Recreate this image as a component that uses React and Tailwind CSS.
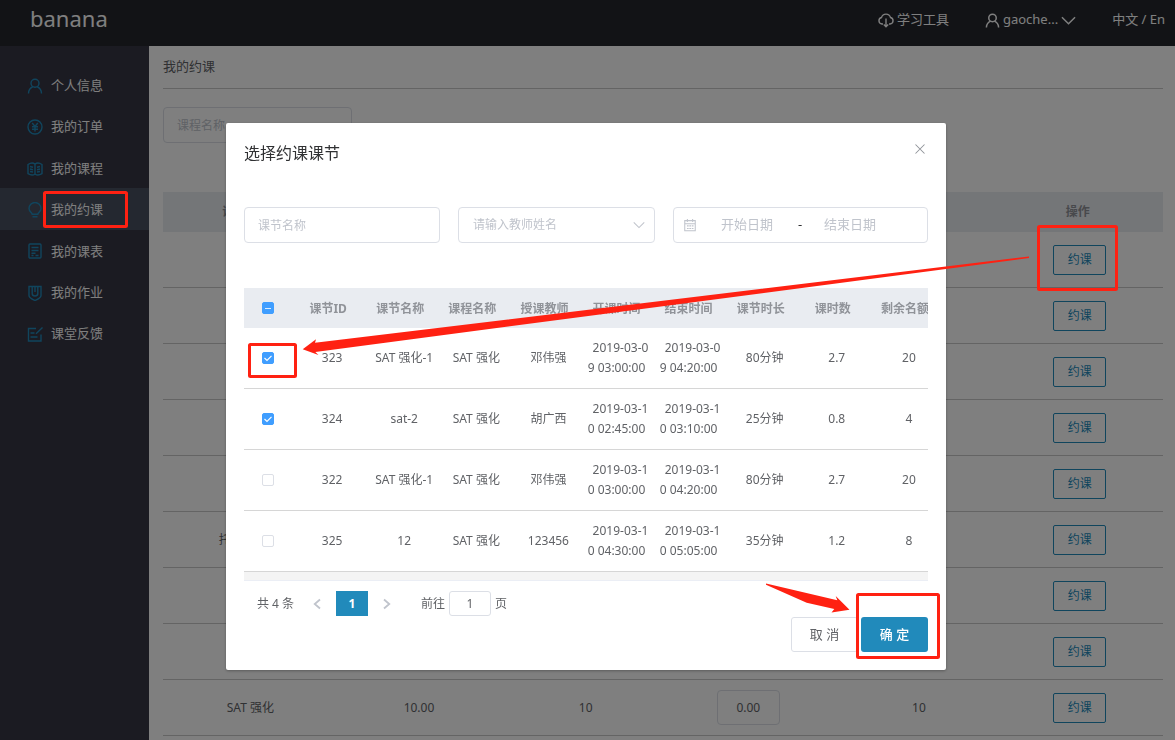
import { useState } from "react";

const menu = [
  { name: "个人信息", icon: "user" },
  { name: "我的订单", icon: "order" },
  { name: "我的课程", icon: "book" },
  { name: "我的约课", icon: "bulb" },
  { name: "我的课表", icon: "doc" },
  { name: "我的作业", icon: "work" },
  { name: "课堂反馈", icon: "edit" },
];

const courses = [
  "SAT 强化",
  "SAT 强化",
  "SAT 强化",
  "SAT 强化",
  "SAT 强化",
  "托福 强化班",
  "SAT 强化",
  "SAT 强化",
  "SAT 强化",
];

const lessons = [
  { id: 323, name: "SAT 强化-1", course: "SAT 强化", teacher: "邓伟强", start: ["2019-03-0", "9 03:00:00"], end: ["2019-03-0", "9 04:20:00"], length: "80分钟", hours: "2.7", left: 20 },
  { id: 324, name: "sat-2", course: "SAT 强化", teacher: "胡广西", start: ["2019-03-1", "0 02:45:00"], end: ["2019-03-1", "0 03:10:00"], length: "25分钟", hours: "0.8", left: 4 },
  { id: 322, name: "SAT 强化-1", course: "SAT 强化", teacher: "邓伟强", start: ["2019-03-1", "0 03:00:00"], end: ["2019-03-1", "0 04:20:00"], length: "80分钟", hours: "2.7", left: 20 },
  { id: 325, name: "12", course: "SAT 强化", teacher: "123456", start: ["2019-03-1", "0 04:30:00"], end: ["2019-03-1", "0 05:05:00"], length: "35分钟", hours: "1.2", left: 8 },
];

const lessonColumns = ["课节ID", "课节名称", "课程名称", "授课教师", "开课时间", "结束时间", "课节时长", "课时数", "剩余名额"];

const iconPaths = {
  user: (
    <>
      <circle cx="8" cy="5.2" r="4" />
      <path d="M1.500 15.500c0-3.200 2-5.600 4.400-6.800M14.500 15.500c0-3.200-2-5.600-4.400-6.800" />
    </>
  ),
  order: (
    <>
      <circle cx="8" cy="8" r="7" />
      <path d="M5.200 4L8 7.500 10.800 4M8 7.500V12.500M5 7.800h6M5 10.200h6" />
    </>
  ),
  book: (
    <>
      <path d="M8 3.200C6.500 1.800 3.500 1.800 1 3.500v9.200c2.500 1.500 5.500 1.500 7 .3 1.500 1.200 4.500 1.200 7-.3V3.500c-2.500-1.700-5.500-1.700-7-.3zM8 3.200V13" />
      <path d="M3 5.500l3 .8M3 8l3 .8M3 10.500l3 .5M13 5.500l-3 .8M13 8l-3 .8M13 10.500l-3 .5" />
    </>
  ),
  bulb: (
    <path d="M5.200 12.300C5 10.500 2 9.500 2 6.500a6 6 0 0 1 12 0c0 3-3 4-3.200 5.800zM5.500 14.800h5" />
  ),
  doc: (
    <>
      <rect x="2" y="1" width="12" height="14" rx="1" />
      <path d="M4.500 4.500h7M4.500 7.500h7M4.500 10.200h4M4.500 12.500h2M8.500 12.500h3" />
    </>
  ),
  work: (
    <>
      <path d="M2 1.500h12v9c0 2.500-3 3.700-6 5-3-1.300-6-2.500-6-5z" />
      <path d="M5.200 2v6.500c0 1.800 1.300 2.500 2.800 2.500s2.800-.7 2.800-2.500V2M8 2v5" />
    </>
  ),
  edit: (
    <>
      <path d="M9 2.500H1.500v12.500h12.500V8.500M3.500 7h4M3.500 11h7" />
      <path d="M9 7.800L15.500 1.500" />
    </>
  ),
  cloud: (
    <>
      <path d="M5 12H4a3.300 3.300 0 0 1-.5-6.500 4.700 4.700 0 0 1 9 0A3.300 3.300 0 0 1 12 12h-1" />
      <path d="M8 6.500V14.500M5.800 12.500L8 14.700l2.200-2.200" />
    </>
  ),
  calendar: (
    <>
      <path d="M2 3h12v11.500H2zM2 6.500h12M5 1v3.500M11 1v3.500" />
      <path d="M4.500 9h2M7.200 9h2M10 9h2M4.500 12h2M7.200 12h2M10 12h2" />
    </>
  ),
  down: <path d="M1 4.500l7 7 7-7" />,
  left: <path d="M12 2L5 8l7 6" />,
  right: <path d="M4 2l7 6-7 6" />,
  close: <path d="M2 2l12 12M14 2L2 14" />,
};

function Icon({ name, className, weight = 1.4 }) {
  return (
    <svg
      viewBox="0 0 16 16"
      fill="none"
      stroke="currentColor"
      strokeWidth={weight}
      className={className}
      aria-hidden="true"
    >
      {iconPaths[name]}
    </svg>
  );
}

function CheckBox({ label, checked, partial, onChange }) {
  return (
    <span className="relative inline-block size-3 align-middle">
      <input
        type="checkbox"
        aria-label={label}
        checked={checked}
        onChange={onChange}
        className="block size-3 appearance-none rounded-[2px] border border-[#dcdfe6] bg-white checked:border-[#409eff] checked:bg-[#409eff]"
      />
      {checked && (
        <svg
          viewBox="0 0 12 12"
          fill="none"
          stroke="white"
          className="pointer-events-none absolute inset-0 size-3"
        >
          {partial ? (
            <path d="M3 6.500h6" strokeOpacity="0.8" />
          ) : (
            <path d="M2.500 6l2.500 2.500L9.500 3.800" strokeWidth="1.200" />
          )}
        </svg>
      )}
    </span>
  );
}

function Header() {
  return (
    <header className="flex h-[46px] shrink-0 items-start justify-between bg-[#24272d] pr-[10px] pl-[30px] text-white">
      <div className="text-[22px] leading-9">banana</div>
      <div className="flex h-10 items-center text-[13px]">
        <a href="#tools" className="flex items-center gap-[3px]">
          <Icon name="cloud" className="size-4" />
          学习工具
        </a>
        <button className="ml-9 flex items-center gap-[3px]">
          <Icon name="user" className="size-[15px]" weight={1.6} />
          gaoche...
          <Icon name="down" className="size-[15px]" weight={1.6} />
        </button>
        <a href="#lang" className="ml-9">
          中文 / En
        </a>
      </div>
    </header>
  );
}

function Sidebar() {
  return (
    <aside className="w-[149px] shrink-0 bg-[#363644] pt-[18px]">
      <nav className="flex h-[290px] flex-col">
        {menu.map((item) => (
          <a
            key={item.name}
            href={`#${item.icon}`}
            className={
              item.icon === "bulb"
                ? "flex flex-1 items-center gap-2 bg-[#485060] pt-[2px] pl-[27px] text-[13px] text-white"
                : "flex flex-1 items-center gap-2 pt-[2px] pl-[27px] text-[13px] text-white"
            }
          >
            <Icon name={item.icon} className="size-4 text-[#218abb]" />
            {item.name}
          </a>
        ))}
      </nav>
    </aside>
  );
}

function Courses() {
  return (
    <main className="min-w-0 flex-1 bg-white pr-3 pl-[14px]">
      <h1 className="border-b border-[#c8c8c8] pb-[2px] text-[13px] leading-10 text-[#606266]">
        我的约课
      </h1>
      <input
        aria-label="课程名称"
        placeholder="课程名称"
        className="mt-[18px] block h-9 w-[189px] rounded-[4px] border border-[#dcdfe6] px-[13px] text-[12px] placeholder:text-[#c0c4cc]"
      />
      <table className="mt-[49px] w-full table-fixed border-separate border-spacing-0 text-center text-[12px] text-[#606266]">
        <thead>
          <tr className="h-10 bg-[#e9ecf1] text-[#909399]">
            <th>课程名称</th>
            <th>课时</th>
            <th>课节数</th>
            <th>价格</th>
            <th>名额</th>
            <th className="pr-1">操作</th>
          </tr>
        </thead>
        <tbody>
          {courses.map((course, index) => (
            <tr key={index} className="h-14 *:border-b *:border-[#c8c8c8]">
              <td className="pl-2">{course}</td>
              <td className="pl-3">10.00</td>
              <td className="pl-3">10</td>
              <td className="pl-1">
                <input
                  aria-label="价格"
                  defaultValue="0.00"
                  className="h-[35px] w-[63px] rounded-[4px] border border-[#dcdfe6] text-center"
                />
              </td>
              <td className="pl-3">10</td>
              <td>
                <button className="h-[30px] w-[53px] rounded-[2px] border border-[#218abb] text-[#218abb]">
                  约课
                </button>
              </td>
            </tr>
          ))}
        </tbody>
      </table>
    </main>
  );
}

function DateCell({ value }) {
  return (
    <td className="leading-5">
      <span className="block pl-2">{value[0]}</span>
      <span className="block">{value[1]}</span>
    </td>
  );
}

function LessonDialog() {
  const [selected, setSelected] = useState([323, 324]);

  const toggle = (id) => {
    setSelected(
      selected.includes(id)
        ? selected.filter((item) => item !== id)
        : [...selected, id]
    );
  };

  const toggleAll = () => {
    setSelected(
      selected.length === lessons.length ? [] : lessons.map((item) => item.id)
    );
  };

  return (
    <div className="fixed inset-0 flex items-start justify-center bg-black/50 pt-[123px] pr-[3px]">
      <section
        role="dialog"
        aria-label="选择约课课节"
        className="w-[720px] rounded-[2px] bg-white px-[18px] pb-[18px] shadow-[0_1px_3px_rgba(0,0,0,0.3)]"
      >
        <div className="flex h-[60px] items-center justify-between">
          <h2 className="text-[16px] text-[#303133]">选择约课课节</h2>
          <button aria-label="关闭" className="mb-2 p-[2px] text-[#909399]">
            <Icon name="close" className="size-3" />
          </button>
        </div>

        <div className="mt-6 grid grid-cols-[196px_197px_1fr] gap-[18px] text-[12px]">
          <input
            aria-label="课节名称"
            placeholder="课节名称"
            className="h-9 w-full rounded-[4px] border border-[#dcdfe6] px-[13px] placeholder:text-[#c0c4cc]"
          />
          <div className="relative">
            <select
              aria-label="请输入教师姓名"
              className="h-9 w-full appearance-none rounded-[4px] border border-[#dcdfe6] px-[14px] text-[#c0c4cc]"
            >
              <option>请输入教师姓名</option>
            </select>
            <Icon
              name="down"
              className="pointer-events-none absolute top-3 right-[10px] size-3 text-[#c0c4cc]"
            />
          </div>
          <div className="flex h-9 items-center rounded-[4px] border border-[#dcdfe6] pl-[9px] text-[13px]">
            <Icon name="calendar" className="size-[14px] text-[#c0c4cc]" weight={1.2} />
            <input
              aria-label="开始日期"
              placeholder="开始日期"
              className="ml-[10px] w-20 text-center placeholder:text-[#c0c4cc]"
            />
            <span className="w-[26px] text-center text-[#303133]">-</span>
            <input
              aria-label="结束日期"
              placeholder="结束日期"
              className="w-[74px] text-center placeholder:text-[#c0c4cc]"
            />
          </div>
        </div>

        <div className="mt-[45px] overflow-hidden">
          <table className="w-[697px] table-fixed border-separate border-spacing-0 text-center text-[12px] text-[#606266]">
            <colgroup>
              <col className="w-12" />
              {lessonColumns.map((name) => (
                <col key={name} className="w-[72px]" />
              ))}
            </colgroup>
            <thead>
              <tr className="h-10 bg-[#e9ecf1] text-[#909399]">
                <th className="leading-none">
                  <CheckBox
                    label="全选"
                    checked={selected.length > 0}
                    partial={selected.length < lessons.length}
                    onChange={toggleAll}
                  />
                </th>
                {lessonColumns.map((name) => (
                  <th key={name} className="pt-[2px] whitespace-nowrap">
                    {name}
                  </th>
                ))}
              </tr>
            </thead>
            <tbody>
              {lessons.map((lesson) => (
                <tr key={lesson.id} className="h-[61px] *:border-b *:border-[#d6d6d6]">
                  <td className="leading-none">
                    <CheckBox
                      label={`选择 ${lesson.id}`}
                      checked={selected.includes(lesson.id)}
                      onChange={() => toggle(lesson.id)}
                    />
                  </td>
                  <td className="pl-2">{lesson.id}</td>
                  <td className="pl-2 whitespace-nowrap">{lesson.name}</td>
                  <td className="pl-2 whitespace-nowrap">{lesson.course}</td>
                  <td className="pl-2">{lesson.teacher}</td>
                  <DateCell value={lesson.start} />
                  <DateCell value={lesson.end} />
                  <td className="pl-2">{lesson.length}</td>
                  <td className="pl-2">{lesson.hours}</td>
                  <td className="pl-2">{lesson.left}</td>
                </tr>
              ))}
            </tbody>
          </table>
          <div className="h-[9px] border-b border-[#ebeef5] bg-[#f4f4f4]" />
        </div>

        <div className="mt-[10px] flex h-[25px] items-center pl-[13px] text-[12px] text-[#606266]">
          <span className="w-[41px]">共 4 条</span>
          <button aria-label="上一页" className="flex w-[38px] justify-center text-[#c0c4cc]">
            <Icon name="left" className="size-3" weight={2.4} />
          </button>
          <button className="h-[25px] w-8 bg-[#218abb] font-bold text-white">1</button>
          <button aria-label="下一页" className="flex w-[38px] justify-center text-[#c0c4cc]">
            <Icon name="right" className="size-3" weight={2.4} />
          </button>
          <label htmlFor="page" className="ml-[15px]">
            前往
          </label>
          <input
            id="page"
            defaultValue="1"
            className="mx-1 h-[25px] w-[42px] rounded-[3px] border border-[#dcdfe6] text-center"
          />
          <span>页</span>
        </div>

        <div className="mt-px flex justify-end gap-[3px] text-[13px]">
          <button className="h-[35px] w-[67px] rounded-[3px] border border-[#dcdfe6] text-[#606266]">
            取 消
          </button>
          <button className="h-[35px] w-[67px] rounded-[3px] bg-[#218abb] font-medium text-white">
            确 定
          </button>
        </div>
      </section>
    </div>
  );
}

// red marks that walk through the booking steps
function Marks() {
  return (
    <svg
      width="1175"
      height="740"
      viewBox="0 0 1175 740"
      fill="none"
      className="pointer-events-none fixed top-0 left-0 z-10"
      aria-hidden="true"
    >
      <g stroke="#ff2112" strokeWidth="3">
        <rect x="44.500" y="192.500" width="82" height="34" rx="1" />
        <rect x="249.500" y="344.500" width="46" height="32" rx="1" />
        <rect x="1038.500" y="226.500" width="78" height="63" rx="1" />
        <rect x="857.500" y="594.500" width="81" height="63" rx="1" />
      </g>
      <g fill="#ff2112">
        <path d="M302.700 349.300L316 339.300 315 342.700 1029 256.500V258L315.300 352 318.500 355z" />
        <path d="M766 583.500L837.300 600.300 835.700 596 849.500 609.700 831.500 612.500 834.300 609 806.700 602.700 766 584.700z" />
      </g>
    </svg>
  );
}

function App() {
  return (
    <div className="flex h-screen flex-col overflow-hidden font-['Noto_Sans','Noto_Sans_CJK_SC',sans-serif]">
      <Header />
      <div className="flex min-h-0 flex-1">
        <Sidebar />
        <Courses />
      </div>
      <LessonDialog />
      <Marks />
    </div>
  );
}

export default App;
